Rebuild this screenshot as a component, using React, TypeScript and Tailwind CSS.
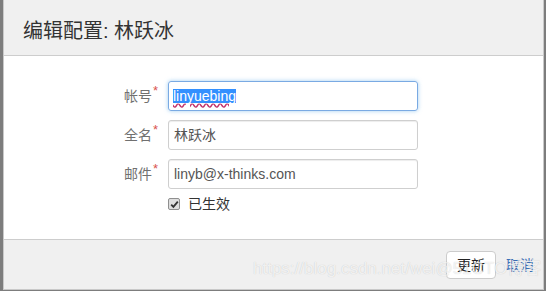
import React from "react";

const FONT = { fontFamily: '"Liberation Sans", "Noto Sans CJK SC", sans-serif' } as const;

function Label({ text }: { text: string }) {
  return (
    <div className="w-[154px] flex justify-end items-start pr-0 text-[14px] leading-[20px] text-[#707070]">
      <span>{text}</span>
      <span className="text-[#d9534f] text-[13px] leading-[13px] ml-[1px] -mt-[2px]">*</span>
    </div>
  );
}

export default function App() {
  return (
    <div className="w-[546px] h-[291px] bg-[#7d7d7d] flex overflow-hidden" style={FONT}>
      <div className="relative ml-[3px] w-[541px] h-[290px] bg-white border-x border-b border-[#c9c9c9] flex flex-col">
        {/* header */}
        <div className="h-[56px] shrink-0 bg-[#f0f0f0] border-b border-[#cdcdcd] flex items-center pt-[7px] pl-[19px]">
          <span className="text-[20px] leading-[24px] text-[#333]">编辑配置: 林跃冰</span>
        </div>
        {/* body */}
        <div className="h-[183px] shrink-0 pt-[25px] flex flex-col">
          <div className="flex items-center gap-[10px] h-[30px]">
            <Label text="帐号" />
            <div className="w-[250px] h-[30px] rounded-[3px] border border-[#7aaae3] shadow-[0_0_4px_rgba(102,175,233,0.6)] flex items-center px-[4px] text-[14px] text-[#555]">
              <span className="bg-[#3390ff] text-white leading-[14px] underline decoration-wavy decoration-[#c0306a] underline-offset-[2px]">linyuebing</span>
            </div>
          </div>
          <div className="flex items-center gap-[10px] h-[30px] mt-[9px]">
            <Label text="全名" />
            <div className="w-[250px] h-[30px] rounded-[3px] border border-[#cfcfcf] shadow-[inset_0_1px_1px_rgba(0,0,0,0.075)] flex items-center px-[5px] text-[14px] text-[#555]">
              林跃冰
            </div>
          </div>
          <div className="flex items-center gap-[10px] h-[30px] mt-[9px]">
            <Label text="邮件" />
            <div className="w-[250px] h-[30px] rounded-[3px] border border-[#cfcfcf] shadow-[inset_0_1px_1px_rgba(0,0,0,0.075)] flex items-center px-[5px] text-[14px] text-[#555]">
              linyb@x-thinks.com
            </div>
          </div>
          <div className="flex items-center mt-[8px] ml-[164px] h-[14px]">
            <div className="w-[12px] h-[12px] rounded-[2px] border border-[#8f8f8f] bg-[#dedede] flex items-center justify-center">
              <svg width="9" height="9" viewBox="0 0 9 9">
                <path d="M1.2 4.6 L3.4 6.9 L7.8 1.6" fill="none" stroke="#333" strokeWidth="1.8" />
              </svg>
            </div>
            <span className="ml-[8px] text-[14px] leading-[20px] text-[#333]">已生效</span>
          </div>
        </div>
        {/* footer */}
        <div className="h-[50px] shrink-0 bg-[#f0f0f0] border-t border-[#cdcdcd] flex items-start justify-end pt-[11px] pr-[9px] gap-[10px]">
          <div className="w-[50px] h-[28px] bg-white border border-[#cccccc] rounded-[4px] flex items-center justify-center text-[14px] text-[#222]">
            更新
          </div>
          <div className="h-[28px] flex items-center text-[14px] text-[#3b6fb6]">取消</div>
        </div>
        {/* watermark */}
        <div className="absolute left-[249px] top-[258px] text-[17px] leading-[22px] text-white/75 whitespace-nowrap [text-shadow:0_0_1px_rgba(0,0,0,0.2)] pointer-events-none">
          https://blog.csdn.net/wei@51CTO博客
        </div>
      </div>
    </div>
  );
}
